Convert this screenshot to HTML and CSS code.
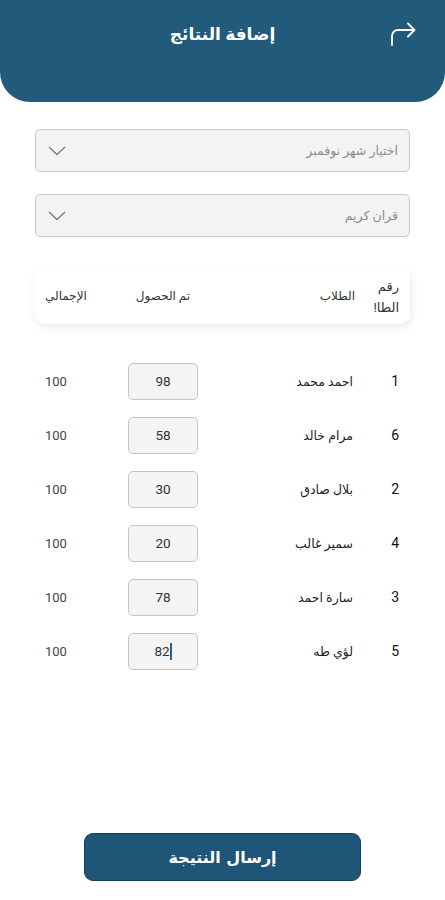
FILE: index.html
```html
<!DOCTYPE html>
<html lang="ar" dir="rtl">
<head>
    <meta charset="UTF-8">
    <meta name="viewport" content="width=device-width, initial-scale=1.0">
    <title>إضافة النتائج</title>
    <link rel="stylesheet" href="styles.css">
</head>
<body>

    <header class="top-bar">
        <svg class="back-icon" width="26" height="24" viewBox="0 0 26 24" fill="none" stroke="#ffffff" stroke-width="1.8" stroke-linecap="round" stroke-linejoin="round">
            <path d="M2 23 V14 a6 6 0 0 1 6 -6 H24"/>
            <path d="M18 1.5 L24.5 8 L18 14.5"/>
        </svg>
        <h1 class="title">إضافة النتائج</h1>
    </header>

    <main class="content">
        <div class="select">
            <span>اختيار شهر نوفمبر</span>
            <svg width="18" height="10" viewBox="0 0 18 10" fill="none" stroke="#7a7a7a" stroke-width="1.3"><path d="M1 1 L9 8.5 L17 1"/></svg>
        </div>
        <div class="select">
            <span>قران كريم</span>
            <svg width="18" height="10" viewBox="0 0 18 10" fill="none" stroke="#7a7a7a" stroke-width="1.3"><path d="M1 1 L9 8.5 L17 1"/></svg>
        </div>

        <div class="table-head grid">
            <div class="num-col">رقم<br>الطا!</div>
            <div>الطلاب</div>
            <div class="center">تم الحصول</div>
            <div class="end">الإجمالي</div>
        </div>

        <div class="rows">
            <div class="row grid">
                <div class="num-col">1</div>
                <div class="name">احمد محمد</div>
                <div class="score">98</div>
                <div class="end total">100</div>
            </div>
            <div class="row grid">
                <div class="num-col">6</div>
                <div class="name">مرام خالد</div>
                <div class="score">58</div>
                <div class="end total">100</div>
            </div>
            <div class="row grid">
                <div class="num-col">2</div>
                <div class="name">بلال صادق</div>
                <div class="score">30</div>
                <div class="end total">100</div>
            </div>
            <div class="row grid">
                <div class="num-col">4</div>
                <div class="name">سمير غالب</div>
                <div class="score">20</div>
                <div class="end total">100</div>
            </div>
            <div class="row grid">
                <div class="num-col">3</div>
                <div class="name">سارة احمد</div>
                <div class="score">78</div>
                <div class="end total">100</div>
            </div>
            <div class="row grid">
                <div class="num-col">5</div>
                <div class="name">لؤي طه</div>
                <div class="score"><span dir="ltr">82<span class="caret"></span></span></div>
                <div class="end total">100</div>
            </div>
        </div>

        <div class="footer">
            <button class="send-btn">إرسال النتيجة</button>
        </div>
    </main>

</body>
</html>
```

FILE: styles.css
```css
body {
    margin: 0;
    background-color: #ffffff;
    font-family: Roboto, "DejaVu Sans", sans-serif;
    color: #222;
    min-height: 900px;
    display: flex;
    flex-direction: column;
}

.top-bar {
    height: 102px;
    background-color: #225a7b;
    border-radius: 0 0 30px 30px;
    position: relative;
    display: flex;
    justify-content: center;
}

.title {
    margin: 22px 0 0;
    color: #fff;
    font-size: 17px;
    font-weight: 700;
    line-height: 24px;
}

.back-icon {
    position: absolute;
    top: 22px;
    right: 29px;
}

.content {
    flex: 1;
    display: flex;
    flex-direction: column;
    padding: 27px 35px 19px 35px;
}

.select {
    height: 43px;
    box-sizing: border-box;
    background-color: #f3f3f3;
    border: 1px solid #cacaca;
    border-radius: 5px;
    display: flex;
    align-items: center;
    justify-content: space-between;
    padding: 0 11px 0 12px;
    margin-bottom: 22px;
    color: #8c8c8c;
    font-size: 12.5px;
}

.grid {
    display: grid;
    grid-template-columns: 47px 1fr 70px 83px;
    align-items: center;
    padding: 0 8px 0 10px;
}

.table-head {
    margin-top: 9px;
    height: 56px;
    border-radius: 10px;
    background-color: #fff;
    box-shadow: 1px 3px 8px rgba(0, 0, 0, 0.09);
    font-size: 12px;
    color: #333;
}

.table-head .num-col {
    line-height: 21px;
    padding-top: 2px;
}

.center {
    text-align: center;
}

.end {
    text-align: left;
}

.rows {
    margin-top: 30px;
}

.row {
    height: 54px;
    font-size: 12.5px;
}

.num-col {
    font-size: 13px;
    padding-right: 3px;
}

.row .num-col {
    font-size: 14px;
    color: #111;
}

.name {
    padding-right: 2px;
}

.score {
    height: 37px;
    box-sizing: border-box;
    background-color: #f4f4f4;
    border: 1px solid #c6c6c6;
    border-radius: 5px;
    display: flex;
    align-items: center;
    justify-content: center;
    font-size: 13.5px;
    color: #333;
}

.caret {
    display: inline-block;
    width: 2px;
    height: 17px;
    background-color: #2a5f8a;
    vertical-align: -4px;
}

.total {
    font-size: 13px;
    color: #444;
}

.footer {
    margin-top: auto;
    display: flex;
    justify-content: center;
}

.send-btn {
    width: 277px;
    height: 48px;
    background-color: #1f5677;
    border: 1px solid #163f58;
    border-radius: 9px;
    color: #fff;
    font-family: "DejaVu Sans", sans-serif;
    font-size: 16px;
    font-weight: 700;
}
```
